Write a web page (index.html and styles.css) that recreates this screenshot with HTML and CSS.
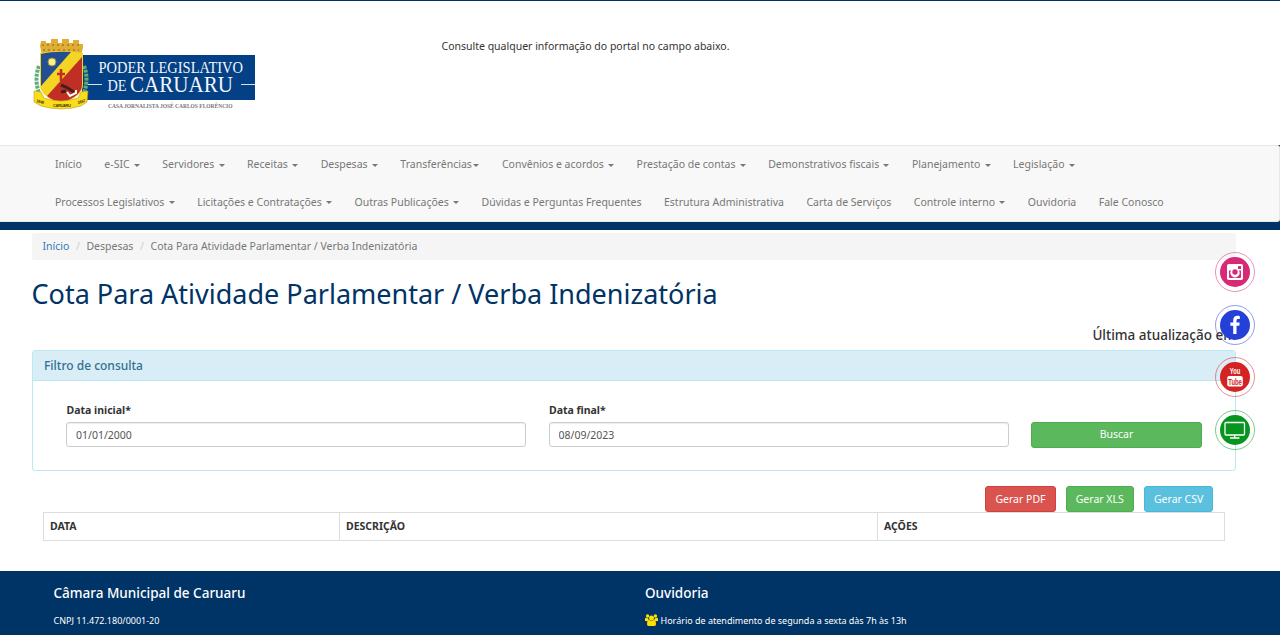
FILE: index.html
```html
<!DOCTYPE html>
<html lang="pt-BR">
<head>
<meta charset="utf-8">
<title>Câmara Municipal de Caruaru</title>
<link rel="stylesheet" href="styles.css">
</head>
<body>
<header class="header">
  <svg class="logo" viewBox="0 0 225 74" width="225" height="74">
    <rect x="52" y="18" width="173" height="45" fill="#034085"/>
    <g fill="none" stroke="#5fae78" stroke-width="4" stroke-dasharray="3 1"><path d="M9 29Q4 42 9 56M54 29Q59 42 54 56"/></g>
    <path d="M11 4h5v2h5V2h7v4h4V2h7v4h4V3h6v4h4v4l-2 7H12L10 9z" fill="#e0ae35"/>
    <path d="M12 8h38M13 13h36" stroke="#a87a24" stroke-width="1.3" stroke-dasharray="2 3"/>
    <path d="M10 16Q31 12 53 16V48Q53 59 31 67Q10 59 10 48Z" fill="#f5d524"/>
    <path d="M11 17Q23 14 41 15L11 49Z" fill="#234f92"/>
    <path d="M52 20V48Q52 59 31 66Q22 63 17 59Z" fill="#c12e24"/>
    <circle cx="22" cy="25" r="4" fill="#fff08b" stroke="#86954a"/>
    <path d="M31 32v12M27 37h8" stroke="#c12e24" stroke-width="2.6"/>
    <path d="M31 48l5 2 8 5M31 55l5-1" stroke="#42201b" stroke-width="3" fill="none"/>
    <path d="M37 55l3 4 6-3v-3" stroke="#fff" stroke-width="2" fill="none"/>
    <path d="M4 54l7 1 3 6q17 6 34 0l3-6 7-1-1 11-6 4q-20 6-40 0l-7-4z" fill="#f8dd18" stroke="#bd9a25" stroke-width=".6"/>
    <text class="ribbon" x="23" y="70" textLength="18">CARUARU</text>
    <text class="ribbon" x="6" y="65" textLength="8" transform="rotate(15 6 65)">1848</text>
    <text class="ribbon" x="48" y="67" textLength="8" transform="rotate(-15 48 67)">1857</text>
    <text class="logo-text" x="68.500" y="36" font-size="16.5" textLength="144.500" lengthAdjust="spacingAndGlyphs">PODER LEGISLATIVO</text>
    <text class="logo-text" x="77.500" y="53.500" font-size="16" textLength="19" lengthAdjust="spacingAndGlyphs">DE</text>
    <text class="logo-text" x="100" y="55" font-size="22.5" textLength="103" lengthAdjust="spacingAndGlyphs">CARUARU</text>
    <path d="M58 47.500h14M211 47.500h14" stroke="#d7e0ec"/>
    <text class="motto" x="78" y="71" textLength="124.500" lengthAdjust="spacingAndGlyphs">CASA JORNALISTA JOSÉ CARLOS FLORÊNCIO</text>
  </svg>
  <p class="search-note">Consulte qualquer informação do portal no campo abaixo.</p>
</header>
<div class="nav-wrap">
  <nav class="navbar">
    <ul class="nav-row">
      <li>Início</li><li>e-SIC <i class="caret"></i></li><li>Servidores <i class="caret"></i></li><li>Receitas <i class="caret"></i></li><li>Despesas <i class="caret"></i></li><li>Transferências<i class="caret"></i></li><li>Convênios e acordos <i class="caret"></i></li><li>Prestação de contas <i class="caret"></i></li><li>Demonstrativos fiscais <i class="caret"></i></li><li>Planejamento <i class="caret"></i></li><li>Legislação <i class="caret"></i></li>
    </ul>
    <ul class="nav-row">
      <li>Processos Legislativos <i class="caret"></i></li><li>Licitações e Contratações <i class="caret"></i></li><li>Outras Publicações <i class="caret"></i></li><li>Dúvidas e Perguntas Frequentes</li><li>Estrutura Administrativa</li><li>Carta de Serviços</li><li>Controle interno <i class="caret"></i></li><li>Ouvidoria</li><li>Fale Conosco</li>
    </ul>
  </nav>
</div>
<main class="content">
  <div class="breadcrumb"><a class="crumb-link">Início</a><span class="slash">/</span><span>Despesas</span><span class="slash">/</span><span>Cota Para Atividade Parlamentar / Verba Indenizatória</span></div>
  <h1 class="title">Cota Para Atividade Parlamentar / Verba Indenizatória</h1>
  <h4 class="updated">Última atualização em</h4>
  <section class="panel">
    <h3 class="panel-heading">Filtro de consulta</h3>
    <form class="filter">
      <label class="field"><span class="field-name">Data inicial*</span><input class="input" type="text" value="01/01/2000"></label>
      <label class="field"><span class="field-name">Data final*</span><input class="input" type="text" value="08/09/2023"></label>
      <button class="btn green search" type="button">Buscar</button>
    </form>
  </section>
  <div class="exports">
    <button class="btn red" type="button">Gerar PDF</button>
    <button class="btn green xls" type="button">Gerar XLS</button>
    <button class="btn blue" type="button">Gerar CSV</button>
  </div>
  <table class="results">
    <tr><th class="col-date">DATA</th><th class="col-desc">DESCRIÇÃO</th><th>AÇÕES</th></tr>
  </table>
</main>
<footer class="footer">
  <div class="footer-col"><h4 class="footer-title">Câmara Municipal de Caruaru</h4><p class="footer-text">CNPJ 11.472.180/0001-20</p></div>
  <div class="footer-col"><h4 class="footer-title">Ouvidoria</h4><p class="footer-text"><svg class="users" viewBox="0 0 13 12" width="13" height="12" fill="#ffdf00"><circle cx="2.6" cy="2" r="1.7"/><circle cx="10.4" cy="2" r="1.7"/><path d="M0 7V5q0-1.3 1-1.3l2 .5 1 2-1 1zM13 7V5q0-1.3-1-1.3l-2 .5-1 2 1 1z"/><circle cx="6.5" cy="4" r="2.5"/><path d="M2 10.3q0-4.4 2.3-4.4 2.2 1.6 4.4 0 2.3 0 2.3 4.4 0 1.7-1.6 1.7H3.600Q2 12 2 10.300z"/></svg>Horário de atendimento de segunda a sexta dàs 7h às 13h</p></div>
</footer>
<aside class="social">
  <svg class="social-icon" viewBox="0 0 40 40"><circle class="ring" cx="20" cy="20" r="19.5" stroke="#d62976"/><circle cx="20" cy="20" r="15" fill="#d62976"/><rect x="12" y="12" width="16" height="16" rx="1.800" fill="#fff"/><path d="M14 18.500h2.200a4.500 4.500 0 1 0 7.600 0H26V25q0 1-1 1H15q-1 0-1-1z" fill="#d62976"/><circle cx="20" cy="20" r="4.200" fill="#fff"/><circle cx="20" cy="20" r="2.700" fill="#d62976"/><rect x="23" y="14" width="3" height="3" rx=".5" fill="#d62976"/></svg>
  <svg class="social-icon" viewBox="0 0 40 40"><circle class="ring" cx="20" cy="20" r="19.5" stroke="#2440d6"/><circle cx="20" cy="20" r="15" fill="#2440d6"/><path d="M24.800 11.200v2.800h-1.700c-1.300 0-1.600.6-1.600 1.500v2h3.200l-.4 3.200h-2.800V29h-3.300v-8.300h-2.800v-3.200h2.800v-2.400c0-2.800 1.700-4.300 4.200-4.300 1.200 0 2.100.1 2.400.4z" fill="#fff"/></svg>
  <svg class="social-icon" viewBox="0 0 40 40"><circle class="ring" cx="20" cy="20" r="19.5" stroke="#d32323"/><circle cx="20" cy="20" r="15" fill="#d32323"/><rect x="12.200" y="19" width="15.600" height="10.500" rx="2" fill="#fff"/><text class="yt" x="14.800" y="17.400" textLength="10.500" lengthAdjust="spacingAndGlyphs" fill="#fff">You</text><text class="yt" x="13.300" y="28" textLength="13.500" lengthAdjust="spacingAndGlyphs" fill="#d32323">Tube</text></svg>
  <svg class="social-icon" viewBox="0 0 40 40"><circle class="ring" cx="20" cy="20" r="19.5" stroke="#06951e"/><circle cx="20" cy="20" r="15" fill="#06951e"/><rect x="10" y="12.500" width="19.500" height="12.500" rx="1" fill="none" stroke="#fff" stroke-width="1.300"/><path d="M19.700 25v2.800M15 28h9.500" fill="none" stroke="#fff" stroke-width="1.300"/></svg>
</aside>
</body>
</html>
```
FILE: styles.css
```css
* { box-sizing: border-box; }
body {
  margin: 0;
  height: 635px;
  overflow: hidden;
  border-top: 1px solid #003366;
  font: 10.5px/15px "Noto Sans", sans-serif;
  color: #333;
  background: #fff;
}
h1, h3, h4, p, ul { margin: 0; padding: 0; }
.header { display: flex; align-items: flex-start; height: 144px; padding: 36px 0 0 30px; }
.logo { flex: none; }
.logo-text { font-family: "Liberation Serif", serif; fill: #f2f5fa; }
.motto { font: bold 7px "Liberation Serif", serif; fill: #777; }
.ribbon { font: bold 4px "Liberation Sans", sans-serif; fill: #493b08; }
.search-note { margin: 2px 0 0 186.500px; }
.nav-wrap { height: 85px; background: #003366; }
.navbar { height: 77px; padding-left: 43.750px; background: #f8f8f8; border: 1px solid #e7e7e7; border-left: 0; border-radius: 0 3px 3px 0; }
.nav-row { display: flex; list-style: none; color: #777; white-space: nowrap; }
.nav-row li { padding: 11.250px; }
.caret { display: inline-block; margin-left: 1.500px; vertical-align: middle; border-top: 3px solid #777; border-left: 3px solid transparent; border-right: 3px solid transparent; }
.content { width: 1204px; height: 341px; margin-left: 32px; padding-top: 3px; }
.breadcrumb { display: flex; height: 27px; padding: 6px 10.500px; background: #f5f5f5; border-radius: 3px; color: #777; }
.crumb-link { color: #337ab7; }
.slash { padding: 0 6.600px; color: #ccc; }
.title { margin: 19px 0 0 -.500px; font-size: 27px; line-height: 30px; font-weight: 400; color: #003366; }
.updated { margin: 19px 0 7px; text-align: right; font-size: 13.500px; line-height: 15px; font-weight: 500; }
.panel { height: 121px; border: 1px solid #bce8f1; border-radius: 3px; }
.panel-heading { height: 30px; padding: 7.500px 11px; font-size: 12px; line-height: 14px; font-weight: 500; color: #31708f; background: #d9edf7; border-bottom: 1px solid #bce8f1; }
.filter { display: grid; grid-template-columns: 460px 460px 171px; column-gap: 22.500px; padding: 22px 33px 0; }
.field { font-weight: 700; }
.field-name { display: block; padding-left: .500px; }
.input { display: block; width: 100%; height: 25px; margin-top: 4px; padding: 4px 9px; border: 1px solid #ccc; border-radius: 3px; font: 10.500px/15px "Noto Sans", sans-serif; color: #555; box-shadow: inset 0 1px 1px rgba(0,0,0,.075); }
.btn { height: 26px; padding: 0 9px; border: 1px solid; border-radius: 3px; font: 10.500px/15px "Noto Sans", sans-serif; color: #fff; }
.green { background: #5cb85c; border-color: #4cae4c; }
.red { background: #d9534f; border-color: #d43f3a; }
.blue { background: #5bc0de; border-color: #46b8da; }
.search { margin-top: 19px; padding-bottom: 2px; }
.exports { display: flex; justify-content: flex-end; gap: 10.200px; margin-top: 15px; padding-right: 22.700px; }
.results { width: 1182px; height: 29px; margin-left: 11px; border-collapse: collapse; table-layout: fixed; }
.results th { padding: 6px; border: 1px solid #ddd; text-align: left; }
.col-date { width: 296px; }
.col-desc { width: 538px; }
.footer { display: grid; grid-template-columns: 591.500px 592px; height: 64px; padding: 14px 0 0 53.500px; background: #003366; color: #fff; }
.footer-title { font-size: 13.500px; line-height: 16px; font-weight: 500; }
.footer-text { margin-top: 12px; font-size: 9px; line-height: 15px; }
.users { margin-right: 2.500px; vertical-align: -2px; }
.social { position: absolute; left: 1215px; top: 252px; display: grid; gap: 12.700px; }
.social-icon { display: block; width: 40px; height: 40px; }
.ring { fill: none; stroke-opacity: .5; }
.yt { font: bold 9px "Liberation Sans Narrow", "Liberation Sans", sans-serif; }
```
